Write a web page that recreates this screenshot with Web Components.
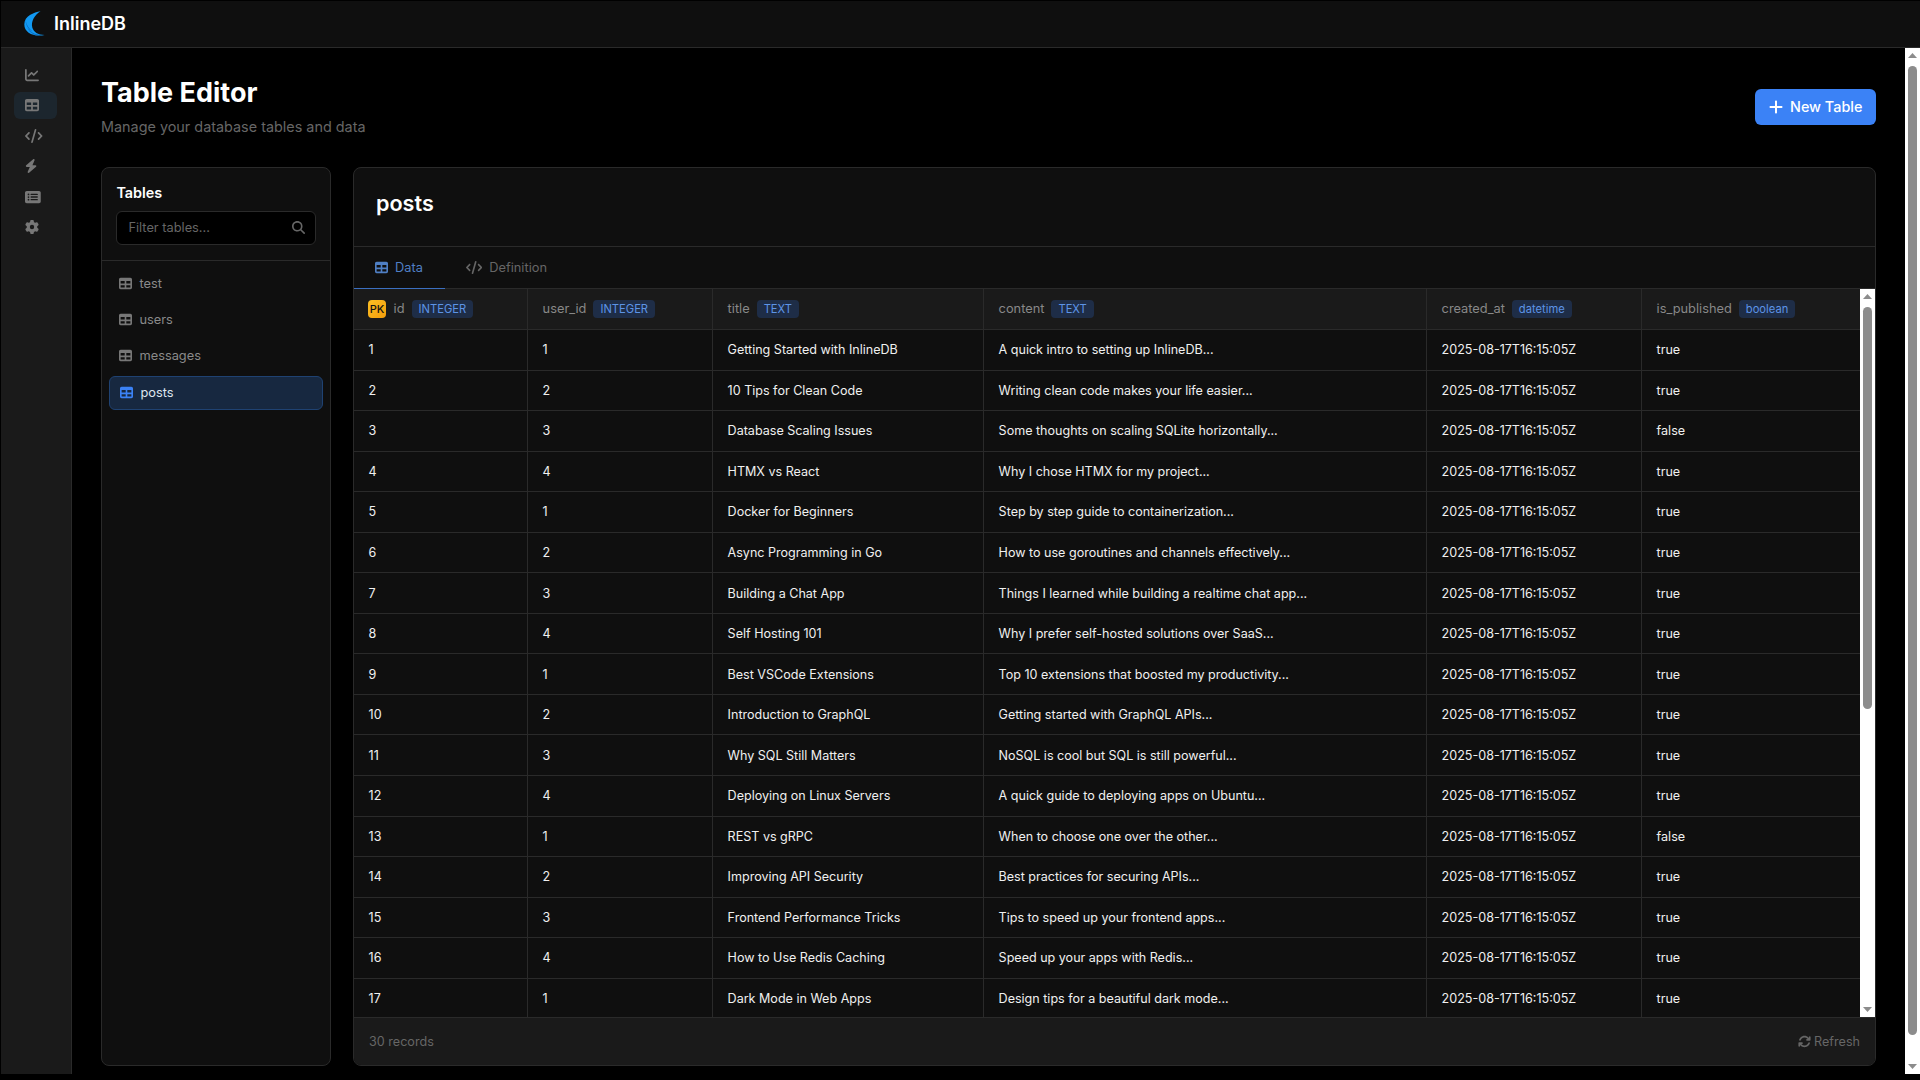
<!DOCTYPE html>
<html><head><meta charset="utf-8"><title>InlineDB</title>
<style>
html,body{margin:0;height:100%;background:#000;overflow:hidden;font-family:Inter,"Liberation Sans",sans-serif;color:#fff}
</style></head><body>
<script>
const ICONS={
table:'<svg viewBox="0 0 512 512" fill="currentColor"><path d="M64 256V160h160v96H64zm0 64h160v96H64V320zm224 96V320h160v96H288zm160-160H288V160h160v96zM64 32C28.700 32 0 60.700 0 96V416c0 35.300 28.700 64 64 64H448c35.300 0 64-28.700 64-64V96c0-35.300-28.700-64-64-64H64z"/></svg>',
code:'<svg viewBox="0 0 640 512" fill="currentColor"><path d="M392.800 1.200c-17-4.900-34.700 5-39.600 22l-128 448c-4.900 17 5 34.700 22 39.600s34.700-5 39.600-22l128-448c4.900-17-5-34.700-22-39.600zm80.600 120.100c-12.500 12.500-12.500 32.800 0 45.300L562.700 256l-89.400 89.400c-12.500 12.500-12.500 32.800 0 45.300s32.800 12.500 45.300 0l112-112c12.500-12.500 12.500-32.800 0-45.300l-112-112c-12.500-12.500-32.800-12.500-45.300 0zm-306.700 0c-12.500-12.500-32.800-12.500-45.300 0l-112 112c-12.500 12.500-12.500 32.800 0 45.300l112 112c12.500 12.500 32.800 12.500 45.300 0s12.500-32.800 0-45.300L77.300 256l89.400-89.400c12.500-12.500 12.500-32.800 0-45.300z"/></svg>',
chart:'<svg viewBox="0 0 512 512" fill="currentColor"><path d="M64 64c0-17.700-14.300-32-32-32S0 46.300 0 64V400c0 44.200 35.800 80 80 80H480c17.700 0 32-14.300 32-32s-14.300-32-32-32H80c-8.800 0-16-7.200-16-16V64zm406.600 86.600c12.500-12.500 12.500-32.800 0-45.300s-32.800-12.500-45.300 0L320 210.700l-57.400-57.400c-12.500-12.500-32.800-12.500-45.300 0l-112 112c-12.500 12.500-12.500 32.800 0 45.300s32.800 12.500 45.300 0L240 221.300l57.400 57.400c12.500 12.500 32.800 12.500 45.300 0l128-128z"/></svg>',
bolt:'<svg viewBox="0 0 448 512" fill="currentColor"><path d="M349.400 44.600c5.900-13.700 1.500-29.700-10.600-38.500s-28.600-8-39.900 1.800l-256 224c-10 8.800-13.600 22.900-8.900 35.300S50.700 288 64 288H175.500L98.600 467.400c-5.900 13.700-1.500 29.700 10.600 38.500s28.600 8 39.900-1.800l256-224c10-8.800 13.600-22.900 8.900-35.300s-16.600-20.700-30-20.700H272.500L349.400 44.600z"/></svg>',
list:'<svg viewBox="0 0 576 512" fill="currentColor"><path d="M0 96C0 60.700 28.700 32 64 32H512c35.300 0 64 28.700 64 64V416c0 35.300-28.700 64-64 64H64c-35.300 0-64-28.700-64-64V96zM128 288a32 32 0 1 0 0-64 32 32 0 1 0 0 64zm32-128a32 32 0 1 0 -64 0 32 32 0 1 0 64 0zM128 384a32 32 0 1 0 0-64 32 32 0 1 0 0 64zm96-248c-13.300 0-24 10.700-24 24s10.700 24 24 24H448c13.300 0 24-10.700 24-24s-10.700-24-24-24H224zm0 96c-13.300 0-24 10.700-24 24s10.700 24 24 24H448c13.300 0 24-10.700 24-24s-10.700-24-24-24H224zm0 96c-13.300 0-24 10.700-24 24s10.700 24 24 24H448c13.300 0 24-10.700 24-24s-10.700-24-24-24H224z"/></svg>',
gear:'<svg viewBox="0 0 512 512" fill="currentColor"><path d="M495.900 166.600c3.200 8.700 .5 18.400-6.400 24.600l-43.300 39.400c1.100 8.300 1.700 16.800 1.700 25.400s-.6 17.100-1.700 25.400l43.300 39.400c6.900 6.200 9.600 15.900 6.400 24.600c-4.400 11.900-9.700 23.300-15.800 34.300l-4.700 8.100c-6.600 11-14 21.400-22.100 31.200c-5.900 7.200-15.700 9.600-24.500 6.800l-55.700-17.700c-13.400 10.300-28.200 18.900-44 25.400l-12.500 57.100c-2 9.100-9 16.300-18.200 17.800c-13.800 2.300-28 3.500-42.500 3.500s-28.700-1.200-42.500-3.500c-9.200-1.500-16.200-8.700-18.200-17.800l-12.500-57.100c-15.800-6.500-30.600-15.100-44-25.400L83.100 425.900c-8.800 2.800-18.600 .3-24.500-6.800c-8.100-9.800-15.500-20.200-22.100-31.200l-4.700-8.100c-6.100-11-11.400-22.400-15.800-34.300c-3.200-8.700-.5-18.400 6.400-24.600l43.300-39.400C64.600 273.100 64 264.600 64 256s.6-17.100 1.700-25.400L22.400 191.200c-6.900-6.200-9.600-15.900-6.400-24.600c4.400-11.900 9.700-23.300 15.800-34.300l4.700-8.100c6.600-11 14-21.400 22.100-31.200c5.900-7.200 15.700-9.600 24.500-6.800l55.700 17.700c13.400-10.300 28.200-18.900 44-25.400l12.500-57.100c2-9.100 9-16.300 18.200-17.800C227.300 1.200 241.500 0 256 0s28.700 1.200 42.500 3.500c9.200 1.500 16.200 8.700 18.200 17.800l12.500 57.100c15.800 6.500 30.600 15.100 44 25.400l55.700-17.700c8.800-2.800 18.600-.3 24.500 6.800c8.100 9.800 15.500 20.200 22.100 31.200l4.700 8.100c6.100 11 11.400 22.400 15.800 34.300zM256 336a80 80 0 1 0 0-160 80 80 0 1 0 0 160z"/></svg>',
search:'<svg viewBox="0 0 512 512" fill="currentColor"><path d="M416 208c0 45.900-14.900 88.300-40 122.700L502.600 457.400c12.500 12.500 12.500 32.800 0 45.300s-32.800 12.500-45.300 0L330.700 376c-34.400 25.200-76.800 40-122.700 40C93.100 416 0 322.900 0 208S93.100 0 208 0S416 93.100 416 208zM208 352a144 144 0 1 0 0-288 144 144 0 1 0 0 288z"/></svg>',
plus:'<svg viewBox="0 0 448 512" fill="currentColor"><path d="M256 80c0-17.700-14.300-32-32-32s-32 14.300-32 32V224H48c-17.700 0-32 14.300-32 32s14.300 32 32 32H192V432c0 17.700 14.300 32 32 32s32-14.300 32-32V288H400c17.700 0 32-14.300 32-32s-14.300-32-32-32H256V80z"/></svg>',
sync:'<svg viewBox="0 0 512 512" fill="currentColor"><path d="M105.100 202.600c7.700-21.800 20.200-42.300 37.800-59.800c62.500-62.500 163.800-62.500 226.300 0L386.300 160H352c-17.700 0-32 14.300-32 32s14.300 32 32 32H463.500c0 0 0 0 0 0h.4c17.700 0 32-14.300 32-32V80c0-17.700-14.300-32-32-32s-32 14.300-32 32v35.200L414.400 97.600c-87.500-87.500-229.300-87.500-316.800 0C73.200 122 55.600 150.700 44.800 181.400c-5.900 16.700 2.900 34.900 19.500 40.800s34.900-2.900 40.800-19.500zM39 289.300c-5 1.500-9.800 4.200-13.700 8.200c-4 4-6.700 8.800-8.100 14c-.3 1.200-.6 2.500-.8 3.800c-.3 1.700-.4 3.400-.4 5.100V432c0 17.700 14.300 32 32 32s32-14.300 32-32V396.900l17.600 17.500 0 0c87.500 87.400 229.300 87.400 316.700 0c24.400-24.400 42.100-53.100 52.900-83.700c5.900-16.700-2.900-34.900-19.500-40.800s-34.900 2.900-40.800 19.500c-7.700 21.800-20.200 42.300-37.800 59.800c-62.500 62.500-163.800 62.500-226.300 0l-.1-.1L125.600 352H160c17.700 0 32-14.300 32-32s-14.300-32-32-32H48.400c-1.600 0-3.200 .1-4.800 .3s-3.100 .5-4.600 1z"/></svg>'
};
class Base extends HTMLElement{
  constructor(){super();this.attachShadow({mode:'open'});}
  html(s){this.shadowRoot.innerHTML=s;}
}
class AppIcon extends Base{
  connectedCallback(){const n=this.getAttribute('name');this.html(`<style>:host{display:inline-flex;align-items:center;justify-content:center;flex:none;height:var(--s,14px)}svg{height:100%;display:block}</style>${ICONS[n]}`);}
}
class ScrollBar extends Base{
  connectedCallback(){
    const top=this.getAttribute('top'),h=this.getAttribute('h');
    this.html(`<style>
    :host{display:flex;flex-direction:column;align-items:center;justify-content:space-between;width:15px;flex:none;background:#fff;box-sizing:border-box}
    .a{width:15px;height:15px;flex:none;display:flex;align-items:center;justify-content:center}
    svg{width:9px;height:5px;display:block}
    .t{flex:1;width:100%;min-height:0;box-sizing:border-box;padding:${top}px 3px 0 3px}
    .th{height:${h}px;background:#8c8c8c;border-radius:5px;width:9px}
    </style>
    <div class="a"><svg viewBox="0 0 9 5"><path fill="#8c8c8c" d="M4.500 0L9 5H0z"/></svg></div>
    <div class="t"><div class="th"></div></div>
    <div class="a"><svg viewBox="0 0 9 5"><path fill="#8c8c8c" d="M0 0H9L4.500 5z"/></svg></div>`);
  }
}
class TopBar extends Base{
  connectedCallback(){this.html(`<style>
  :host{display:flex;align-items:center;height:47px;flex:none;box-sizing:border-box;background:#0f0f0f;border-bottom:1px solid #2a2a2a;padding:0 0 1px 23px;gap:9px;font-weight:600;font-size:18px}
  svg{width:21px;height:25px;display:block}
  </style>
  <svg viewBox="0 0 21 25"><path fill="#1299f2" d="M16.500 0.200C10 1.500 0.300 4.500 0.300 13.500C0.300 20.500 7 24.600 15 24.600C17 24.600 19 24.300 20.600 23.900C14 23.900 9.500 21 8.300 16.500C6.800 10.500 10.500 4 16.500 0.200Z"/><path fill="#0b64b8" d="M3.500 17C6.500 21.500 11 23.400 16.500 24C11.500 24.800 6 22.500 3.500 17Z"/><path fill="#0b64b8" d="M1.500 9.500C2.500 14 5 18 8.500 20.500C5 19 2 15 1.500 9.500Z"/></svg><span>InlineDB</span>`);}
}
class SideNav extends Base{
  connectedCallback(){
    const items=[['chart',0],['table',1],['code',0],['bolt',0],['list',0],['gear',0]];
    this.html(`<style>
    :host{display:flex;flex-direction:column;flex:none;background:#1a1a1a;border-right:1px solid #2a2a2a;padding:13px 0 0 13px;box-sizing:border-box;width:71px;gap:3.600px;color:#777;--s:14px}
    div{width:43px;height:27px;display:flex;align-items:center;padding-left:11px;box-sizing:border-box;border-radius:6px}
    .on{background:#1c262e}
    </style>${items.map(([n,a])=>`<div class="${a?'on':''}"><app-icon name="${n}"></app-icon></div>`).join('')}`);
  }
}
class PageHead extends Base{
  connectedCallback(){this.html(`<style>
  :host{display:flex;justify-content:space-between;align-items:flex-start;height:91px;flex:none}
  h1{margin:1px 0 0;font-size:27px;font-weight:700;line-height:32px}
  p{margin:8px 0 0;font-size:14.400px;line-height:20px;color:#666}
  </style><div><h1><slot name="title"></slot></h1><p><slot name="sub"></slot></p></div><slot name="action"></slot>`);}
}
class NewBtn extends Base{
  connectedCallback(){this.html(`<style>
  :host{display:inline-flex;align-items:center;gap:7px;height:36px;margin-top:13px;padding:0 14px 1px;box-sizing:border-box;background:#3b82f6;border-radius:6px;font-size:14.400px;font-weight:500;--s:16px;color:#fff;width:121px;white-space:nowrap}
  </style><app-icon name="plus"></app-icon><slot></slot>`);}
}
class TablesPanel extends Base{
  connectedCallback(){this.html(`<style>
  :host{display:flex;flex-direction:column;width:230px;flex:none;background:#0f0f0f;border:1px solid #2a2a2a;border-radius:8px;box-sizing:border-box}
  .h{padding:15px 14.400px 14.500px;border-bottom:1px solid #2a2a2a}
  h3{margin:0 0 8px;font-size:14.400px;font-weight:600;line-height:20px}
  .f{display:flex;align-items:center;justify-content:space-between;height:34px;box-sizing:border-box;background:#000;border:1px solid #2a2a2a;border-radius:6px;padding:0 9.500px 1px 11px;color:#666;--s:13px}
  .f span{font-size:12.800px}
  .l{padding:5.500px 7px;display:flex;flex-direction:column}
  </style><div class="h"><h3>Tables</h3><div class="f"><span>Filter tables...</span><app-icon name="search"></app-icon></div></div><div class="l"><slot></slot></div>`);}
}
class TableItem extends Base{
  connectedCallback(){const a=this.hasAttribute('active');this.html(`<style>
  :host{display:flex;align-items:center;gap:7.500px;height:34px;margin-bottom:2px;padding-left:9px;box-sizing:border-box;border-radius:6px;border:1px solid transparent;font-size:12.800px;color:#8a8a8a;--s:13px}
  :host([active]){background:#172840;border-color:#1f4272;color:#dfe6ef;margin-top:1.500px;padding-left:10px}
  app-icon{color:${a?'#3b82f6':'#777'}}
  </style><app-icon name="table"></app-icon><slot></slot>`);}
}
class TypeBadge extends Base{
  connectedCallback(){this.html(`<style>
  :host{display:inline-block;background:#1e2d47;color:#5d94e6;font-size:11.200px;line-height:18px;padding:0 7px;border-radius:4px;font-weight:400}
  </style><slot></slot>`);}
}
class DataView extends Base{
  connectedCallback(){
    const cols=[['id','INTEGER',174],['user_id','INTEGER',185],['title','TEXT',271],['content','TEXT',443],['created_at','datetime',215],['is_published','boolean',219]];
    const rows=[['Getting Started with InlineDB','A quick intro to setting up InlineDB...'],['10 Tips for Clean Code','Writing clean code makes your life easier...'],['Database Scaling Issues','Some thoughts on scaling SQLite horizontally...'],['HTMX vs React','Why I chose HTMX for my project...'],['Docker for Beginners','Step by step guide to containerization...'],['Async Programming in Go','How to use goroutines and channels effectively...'],['Building a Chat App','Things I learned while building a realtime chat app...'],['Self Hosting 101','Why I prefer self-hosted solutions over SaaS...'],['Best VSCode Extensions','Top 10 extensions that boosted my productivity...'],['Introduction to GraphQL','Getting started with GraphQL APIs...'],['Why SQL Still Matters','NoSQL is cool but SQL is still powerful...'],['Deploying on Linux Servers','A quick guide to deploying apps on Ubuntu...'],['REST vs gRPC','When to choose one over the other...'],['Improving API Security','Best practices for securing APIs...'],['Frontend Performance Tricks','Tips to speed up your frontend apps...'],['How to Use Redis Caching','Speed up your apps with Redis...'],['Dark Mode in Web Apps','Design tips for a beautiful dark mode...']];
    const falseRows=new Set([3,13]);
    const tr=rows.map((r,i)=>{const n=i+1,u=(i%4)+1;return `<tr><td>${n}</td><td>${u}</td><td>${r[0]}</td><td>${r[1]}</td><td>2025-08-17T16:15:05Z</td><td>${falseRows.has(n)?'false':'true'}</td></tr>`}).join('');
    this.html(`<style>
    :host{display:flex;flex-direction:column;flex:1;min-width:0;background:#0f0f0f;border:1px solid #2a2a2a;border-radius:8px;box-sizing:border-box;overflow:hidden}
    .t{height:79px;flex:none;box-sizing:border-box;border-bottom:1px solid #2a2a2a;padding:22px 22px 0}
    h2{margin:0;font-size:21.600px;font-weight:600;line-height:26px}
    .tabs{display:flex;height:42px;flex:none;box-sizing:border-box;border-bottom:1px solid #2a2a2a;font-size:12.800px;color:#666;--s:13px}
    .tab{display:flex;align-items:center;gap:7px;padding:0 21px;box-sizing:border-box;height:42px;border-bottom:1px solid transparent}
    .tab.on{color:#4f7fc4;border-bottom-color:#3b6fc0;width:91px;padding:0 0 0 21px}
    .body{flex:1;min-height:0;display:flex}
    .scroll{flex:1;min-width:0;overflow:hidden}
    table{border-collapse:separate;border-spacing:0;table-layout:fixed;width:1507px;font-size:12.550px}
    th{height:41px;box-sizing:border-box;background:#1a1a1a;color:#888;font-weight:400;text-align:left;padding:0 14.600px 1px;border-right:1px solid #2a2a2a;border-bottom:1px solid #2a2a2a;white-space:nowrap;font-size:12.800px;vertical-align:middle}
    th:last-child,td:last-child{border-right:0}
    th>div{display:flex;align-items:center;gap:7px}
    td{height:40.560px;box-sizing:border-box;padding:0 14.600px;color:#f0f0f0;border-right:1px solid #2a2a2a;border-bottom:1px solid #2a2a2a;white-space:nowrap}
    .pk{display:inline-block;width:18px;height:18px;border-radius:4px;margin:0 .6px 0 -.6px;background:linear-gradient(135deg,#fbbf24,#f59e0b);color:#111;font-size:11px;line-height:18px;text-align:center;font-weight:500}
    .foot{height:48px;flex:none;box-sizing:border-box;border-top:1px solid #2a2a2a;background:#1a1a1a;display:flex;justify-content:space-between;align-items:center;padding:0 15px;font-size:12.600px;color:#666;--s:13px}
    .r{display:flex;align-items:center;gap:3px}
    </style>
    <div class="t"><h2><slot name="name"></slot></h2></div>
    <div class="tabs"><div class="tab on"><app-icon name="table"></app-icon>Data</div><div class="tab"><app-icon name="code"></app-icon>Definition</div></div>
    <div class="body"><div class="scroll"><table><colgroup>${cols.map(c=>`<col style="width:${c[2]}px">`).join('')}</colgroup>
    <thead><tr>${cols.map((c,i)=>`<th><div>${i==0?'<span class="pk">PK</span>':''}<span>${c[0]}</span><type-badge>${c[1]}</type-badge></div></th>`).join('')}</tr></thead>
    <tbody>${tr}</tbody></table></div><scroll-bar top="3" h="402"></scroll-bar></div>
    <div class="foot"><span>30 records</span><span class="r"><app-icon name="sync"></app-icon>Refresh</span></div>`);
  }
}
class AppShell extends Base{
  connectedCallback(){this.html(`<style>
  :host{display:flex;flex-direction:column;height:1074px;border-left:1px solid #000;border-top:1px solid #000;box-sizing:border-box}
  .b{flex:1;display:flex;min-height:0}
  main{flex:1;min-width:0;overflow:hidden;background:#000;padding:28px 29px 0;box-sizing:border-box}
  .c{display:flex;gap:22px;height:899px}
  </style><top-bar></top-bar><div class="b"><side-nav></side-nav><main><slot name="head"></slot><div class="c"><slot></slot></div></main><scroll-bar top="3" h="969"></scroll-bar></div>`);}
}
for(const [n,c] of Object.entries({'app-icon':AppIcon,'scroll-bar':ScrollBar,'top-bar':TopBar,'side-nav':SideNav,'page-head':PageHead,'new-btn':NewBtn,'tables-panel':TablesPanel,'table-item':TableItem,'type-badge':TypeBadge,'data-view':DataView,'app-shell':AppShell}))customElements.define(n,c);
</script>
<app-shell>
  <page-head slot="head"><span slot="title">Table Editor</span><span slot="sub">Manage your database tables and data</span><new-btn slot="action">New Table</new-btn></page-head>
  <tables-panel><table-item>test</table-item><table-item>users</table-item><table-item>messages</table-item><table-item active>posts</table-item></tables-panel>
  <data-view><span slot="name">posts</span></data-view>
</app-shell>
</body></html>
